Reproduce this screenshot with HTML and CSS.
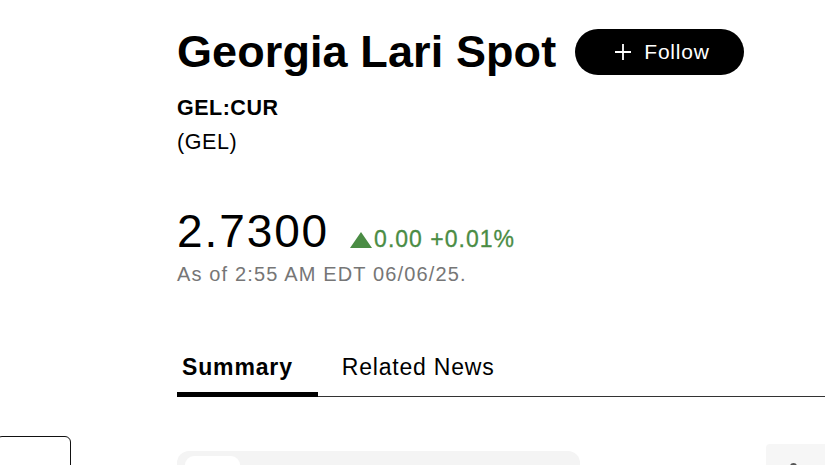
FILE: index.html
```html
<!DOCTYPE html>
<html lang="en">
<head>
<meta charset="utf-8">
<title>Georgia Lari Spot</title>
<link rel="stylesheet" href="styles.css">
</head>
<body>
<div class="page">
  <aside class="gutter">
    <div class="side-box"></div>
  </aside>
  <main class="main">
    <header class="quote-header">
      <div class="title-row">
        <h1 class="title">Georgia Lari Spot</h1>
        <button class="follow-btn" type="button">
          <svg class="plus" width="18" height="18" viewBox="0 0 18 18" aria-hidden="true">
            <path d="M9 1v16M1 9h16" stroke="#fff" stroke-width="1.8" fill="none"/>
          </svg>
          <span>Follow</span>
        </button>
      </div>
      <div class="ticker">GEL:CUR</div>
      <div class="currency">(GEL)</div>
      <div class="price-row">
        <span class="price">2.7300</span>
        <span class="change">
          <svg class="tri" width="22" height="16" viewBox="0 0 22 16" aria-hidden="true">
            <path d="M11 0L22 16H0Z" fill="#4a8c44"/>
          </svg>0.00 +0.01%</span>
      </div>
      <div class="asof">As of 2:55 AM EDT 06/06/25.</div>
    </header>
    <nav class="tabs">
      <a class="tab active">Summary</a>
      <a class="tab">Related News</a>
    </nav>
    <section class="cards">
      <div class="card-main">
        <div class="card-chip"></div>
      </div>
      <div class="card-side">
        <div class="card-dot"></div>
      </div>
    </section>
  </main>
</div>
</body>
</html>
```
FILE: styles.css
```css
html, body {
  margin: 0;
  padding: 0;
  background: #ffffff;
  overflow: hidden;
}

body {
  font-family: "Liberation Sans", Arial, Helvetica, sans-serif;
  color: #000;
  height: 465px;
}

.page {
  display: grid;
  grid-template-columns: 177px 1fr;
  width: 825px;
  height: 465px;
  overflow: hidden;
}

.gutter {
  padding-top: 436px;
}

.side-box {
  margin-left: -4px;
  width: 75px;
  height: 60px;
  border: 1.5px solid #111;
  border-radius: 6px;
  box-sizing: border-box;
}

.main {
  padding-top: 26px;
}

.title-row {
  display: flex;
  align-items: center;
  gap: 19px;
  height: 52px;
}

.title {
  margin: 0;
  font-size: 45px;
  line-height: 52px;
  font-weight: 700;
  letter-spacing: 0.1px;
}

.follow-btn {
  display: flex;
  align-items: center;
  gap: 12px;
  height: 46px;
  width: 169px;
  padding: 0 0 0 39px;
  box-sizing: border-box;
  border: none;
  border-radius: 23px;
  background: #000;
  color: #fff;
  font-family: "Liberation Sans", Arial, sans-serif;
  font-size: 21px;
  letter-spacing: 0.8px;
}

.plus {
  display: block;
}

.ticker {
  margin-top: 13px;
  font-size: 21.5px;
  font-weight: 700;
  line-height: 34px;
  letter-spacing: 0.5px;
}

.currency {
  font-size: 21.5px;
  line-height: 34px;
  letter-spacing: 0.6px;
}

.price-row {
  margin-top: 45px;
  display: flex;
  align-items: baseline;
  gap: 21px;
}

.price {
  font-size: 46px;
  line-height: 54px;
  letter-spacing: 1.9px;
}

.change {
  color: #4a8c44;
  font-size: 23px;
  letter-spacing: 1px;
  -webkit-text-stroke: 0.3px #4a8c44;
}

.tri {
  margin-right: 2px;
  vertical-align: -1px;
}

.asof {
  margin-top: 4px;
  font-size: 20px;
  line-height: 24px;
  color: #767676;
  letter-spacing: 1.15px;
}

.tabs {
  margin-top: 67px;
  display: flex;
  gap: 24px;
  border-bottom: 1.5px solid #333;
}

.tab {
  display: block;
  font-size: 23px;
  line-height: 28px;
  padding: 0 0 11px 0;
  letter-spacing: 0.8px;
  margin-bottom: -1.5px;
  border-bottom: 5px solid transparent;
}

.tab.active {
  font-weight: 700;
  padding: 0 25px 11px 5px;
  letter-spacing: 0.85px;
  border-bottom-color: #000;
}

.cards {
  margin-top: 47px;
  display: flex;
  align-items: flex-start;
}

.card-main {
  margin-top: 7px;
  width: 403px;
  height: 60px;
  background: #f4f4f4;
  border-radius: 12px;
  padding: 5px 0 0 8px;
  box-sizing: border-box;
}

.card-chip {
  width: 55px;
  height: 40px;
  background: #fff;
  border-radius: 9px;
}

.card-side {
  margin-left: auto;
  width: 59px;
  height: 60px;
  background: #f6f6f6;
  border-radius: 4px 0 0 4px;
  padding: 19px 0 0 24px;
  box-sizing: border-box;
}

.card-dot {
  width: 7px;
  height: 7px;
  border-radius: 50%;
  background: #555;
}
```
